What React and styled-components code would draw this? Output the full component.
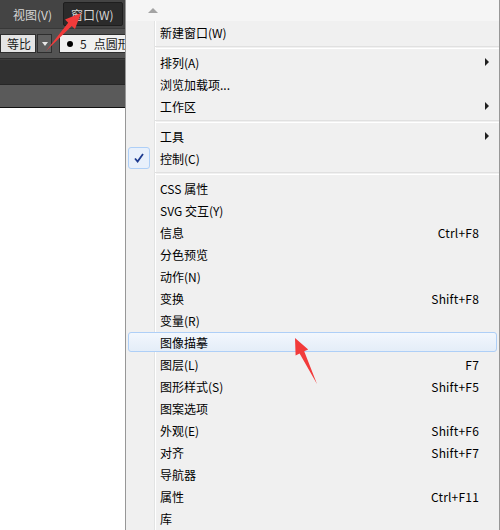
import React from "react";
import styled, { createGlobalStyle } from "styled-components";

const GlobalStyle = createGlobalStyle`
  html, body {
    margin: 0;
    padding: 0;
    background: #ffffff;
  }
  body {
    font-family: "Noto Sans CJK SC", "Microsoft YaHei", sans-serif;
    font-size: 12px;
  }
`;

const Screen = styled.div`
  position: relative;
  width: 500px;
  height: 530px;
  overflow: hidden;
  display: flex;
`;

const LeftPane = styled.div`
  width: 125px;
  display: flex;
  flex-direction: column;
  background: #ffffff;
`;

const MenuBar = styled.div`
  height: 29px;
  background: #444444;
  display: flex;
  align-items: center;
  padding-left: 4px;
  gap: 2px;
  box-sizing: border-box;
  border-bottom: 1px solid #383838;
`;

const BarItem = styled.div`
  height: 24px;
  padding: 0 8px 0 ${(p) => (p.active ? "7px" : "8px")};
  display: flex;
  align-items: center;
  color: #d6d6d6;
  font-size: 12px;
  white-space: nowrap;
  box-sizing: border-box;
  border-radius: 2px;
  background: ${(p) => (p.active ? "#2b2b2b" : "transparent")};
  border: 1px solid ${(p) => (p.active ? "#1e1e1e" : "transparent")};
`;

const ControlBar = styled.div`
  height: 30px;
  background: #535353;
  display: flex;
  align-items: center;
  border-bottom: 1px solid #2c2c2c;
  box-sizing: border-box;
  overflow: hidden;
`;

const Field = styled.div`
  height: 19px;
  width: ${(p) => p.w}px;
  margin-left: ${(p) => p.ml || 0}px;
  flex-shrink: 0;
  box-sizing: border-box;
  background: ${(p) => p.bg};
  border: 1px solid #2e2e2e;
  display: flex;
  align-items: center;
  padding-left: ${(p) => p.pl || 0}px;
  color: #1a1a1a;
  font-size: 12px;
  white-space: nowrap;
  overflow: hidden;
  gap: ${(p) => p.gap || 0}px;
`;

const DropButton = styled.div`
  width: 15px;
  height: 19px;
  box-sizing: border-box;
  margin-left: 1px;
  background: #5f5f5f;
  border: 1px solid #2e2e2e;
  display: flex;
  align-items: center;
  justify-content: center;
  flex-shrink: 0;
`;

const TinyTriangle = styled.span`
  width: 0;
  height: 0;
  border-left: 3px solid transparent;
  border-right: 3px solid transparent;
  border-top: 4px solid #e8e8e8;
`;

const Dot = styled.span`
  width: 6px;
  height: 6px;
  flex-shrink: 0;
  border-radius: 50%;
  background: #000;
`;

const FieldText = styled.span`
  flex-shrink: 0;
`;

const PanelHead = styled.div`
  height: 24px;
  background: #313131;
  border-top: 1px solid #3c3c3c;
  border-bottom: 1px solid #262626;
`;

const PanelTabs = styled.div`
  height: 22px;
  background: #5a5a5a;
  border-bottom: 1px solid #111;
`;

const Canvas = styled.div`
  flex: 1;
  background: #ffffff;
`;

const Menu = styled.div`
  width: 375px;
  height: 530px;
  box-sizing: border-box;
  border-left: 1px solid #979797;
  border-right: 1px solid #979797;
  background: #f0f0f0;
  display: flex;
  flex-direction: column;
`;

const ScrollUp = styled.div`
  height: 21px;
  background: #f5f5f5;
  display: flex;
  align-items: center;
  padding-left: 22px;
`;

const UpTriangle = styled.span`
  width: 0;
  height: 0;
  border-left: 5px solid transparent;
  border-right: 5px solid transparent;
  border-bottom: 5px solid #a3a3a3;
`;

const List = styled.div`
  flex: 1;
  background:
    linear-gradient(to right, transparent 28px, #e2e3e3 28px, #e2e3e3 29px, #ffffff 29px, #ffffff 30px, transparent 30px);
  display: flex;
  flex-direction: column;
`;

const Item = styled.div`
  position: relative;
  height: 22px;
  flex-shrink: 0;
  display: flex;
  align-items: center;
  padding: 0 20px 0 34px;
  color: #000;
  font-size: 12px;
  white-space: nowrap;

  ${(p) =>
    p.hot &&
    `
    &::before {
      content: "";
      position: absolute;
      left: 2px;
      right: 2px;
      top: 1px;
      bottom: 1px;
      border: 1px solid #aecff7;
      border-radius: 3px;
      background: linear-gradient(#f2f7fd, #e4edf8);
    }
  `}
`;

const Label = styled.span`
  position: relative;
  flex: 1;
`;

const Shortcut = styled.span`
  position: relative;
  letter-spacing: 0.2px;
`;

const SubArrow = styled.span`
  position: absolute;
  right: 10px;
  top: 7px;
  width: 0;
  height: 0;
  border-top: 4px solid transparent;
  border-bottom: 4px solid transparent;
  border-left: 4px solid #202020;
`;

const CheckBox = styled.span`
  position: absolute;
  left: 2px;
  top: 0;
  width: 22px;
  height: 22px;
  box-sizing: border-box;
  border: 1px solid #aecff7;
  border-radius: 3px;
  background: #e8f0fb;
  display: flex;
  align-items: center;
  justify-content: center;
`;

const Separator = styled.div`
  height: 8px;
  flex-shrink: 0;
  display: flex;
  align-items: center;
  padding-left: 29px;

  &::after {
    content: "";
    flex: 1;
    height: 1px;
    border-top: 1px solid #e0e0e0;
    border-bottom: 1px solid #ffffff;
  }
`;

const Overlay = styled.svg`
  position: absolute;
  left: 0;
  top: 0;
  pointer-events: none;
`;

const items = [
  { label: "新建窗口(W)" },
  { sep: true },
  { label: "排列(A)", sub: true },
  { label: "浏览加载项..." },
  { label: "工作区", sub: true },
  { sep: true },
  { label: "工具", sub: true },
  { label: "控制(C)", checked: true },
  { sep: true },
  { label: "CSS 属性" },
  { label: "SVG 交互(Y)" },
  { label: "信息", key: "Ctrl+F8" },
  { label: "分色预览" },
  { label: "动作(N)" },
  { label: "变换", key: "Shift+F8" },
  { label: "变量(R)" },
  { label: "图像描摹", hot: true },
  { label: "图层(L)", key: "F7" },
  { label: "图形样式(S)", key: "Shift+F5" },
  { label: "图案选项" },
  { label: "外观(E)", key: "Shift+F6" },
  { label: "对齐", key: "Shift+F7" },
  { label: "导航器" },
  { label: "属性", key: "Ctrl+F11" },
  { label: "库" },
];

const CheckMark = () => (
  <svg width="12" height="12" viewBox="0 0 12 12">
    <path d="M2 6.5 L4.6 9.5 L10 2" fill="none" stroke="#1c3a8f" strokeWidth="1.8" />
  </svg>
);

const App = () => {
  return (
    <>
      <GlobalStyle />
      <Screen>
        <LeftPane>
          <MenuBar>
            <BarItem>视图(V)</BarItem>
            <BarItem active>窗口(W)</BarItem>
          </MenuBar>
          <ControlBar>
            <Field w={36} bg="#e4e4e4" pl={6}>
              等比
            </Field>
            <DropButton>
              <TinyTriangle />
            </DropButton>
            <Field w={70} ml={7} bg="#f0f0f0" pl={7} gap={7}>
              <Dot />
              <FieldText>5</FieldText>
              <FieldText>点圆形</FieldText>
            </Field>
          </ControlBar>
          <PanelHead />
          <PanelTabs />
          <Canvas />
        </LeftPane>
        <Menu>
          <ScrollUp>
            <UpTriangle />
          </ScrollUp>
          <List>
            {items.map((it, i) =>
              it.sep ? (
                <Separator key={i} />
              ) : (
                <Item key={i} hot={it.hot}>
                  {it.checked && (
                    <CheckBox>
                      <CheckMark />
                    </CheckBox>
                  )}
                  <Label>{it.label}</Label>
                  {it.key && <Shortcut>{it.key}</Shortcut>}
                  {it.sub && <SubArrow />}
                </Item>
              )
            )}
          </List>
        </Menu>
        <Overlay width="500" height="530" viewBox="0 0 500 530">
          <polygon
            points="81,13 75,29 71.8,26.1 46,51 68.2,22.7 65,19.6"
            fill="#f23b3b"
          />
          <polygon
            points="295,338 308.2,349.4 304.2,351.3 317,384 299.6,353.5 295.6,355.4"
            fill="#f23b3b"
          />
        </Overlay>
      </Screen>
    </>
  );
};

export default App;
